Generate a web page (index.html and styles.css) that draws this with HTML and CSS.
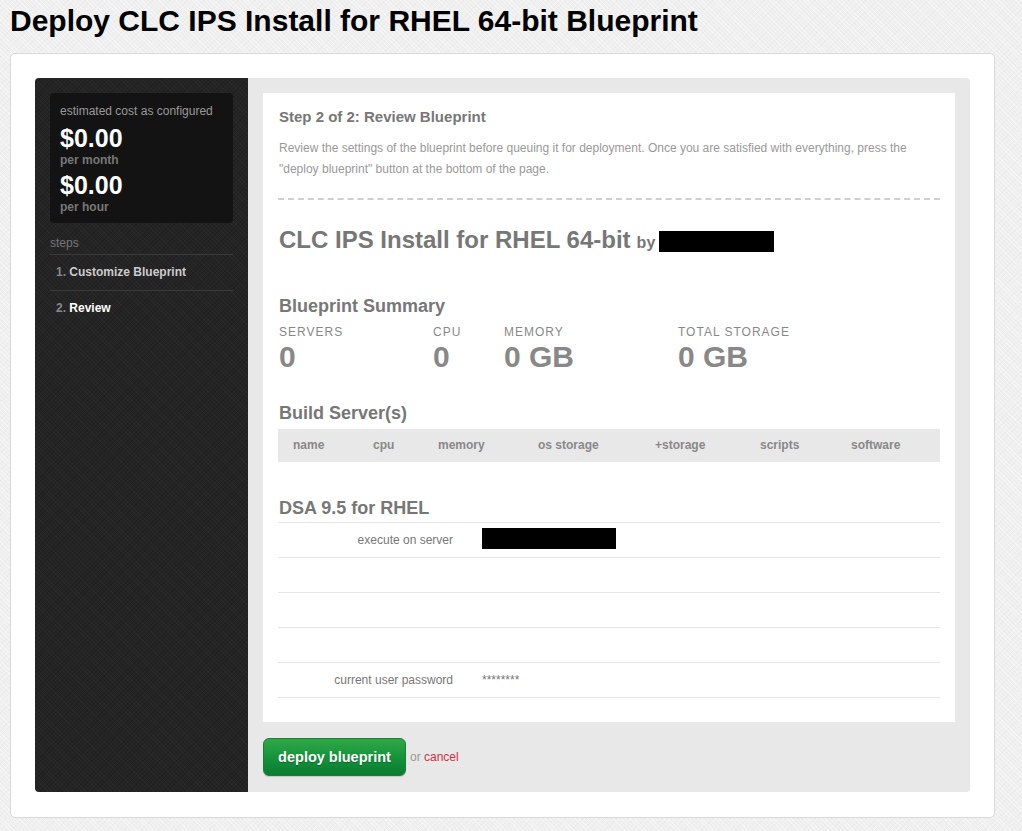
FILE: index.html
```html
<!DOCTYPE html>
<html>
<head>
<meta charset="utf-8">
<title>Deploy Blueprint</title>
<link rel="stylesheet" href="styles.css">
</head>
<body>
<h1 class="page-title">Deploy CLC IPS Install for RHEL 64-bit Blueprint</h1>
<div class="panel">
  <div class="wizard">
    <aside class="sidebar">
      <div class="cost">
        <div class="cost-label">estimated cost as configured</div>
        <div class="cost-value">$0.00</div>
        <div class="cost-unit">per month</div>
        <div class="cost-value">$0.00</div>
        <div class="cost-unit">per hour</div>
      </div>
      <div class="steps-title">steps</div>
      <ol class="steps">
        <li class="step"><span class="num">1.</span> Customize Blueprint</li>
        <li class="step active"><span class="num">2.</span> Review</li>
      </ol>
    </aside>
    <main class="main">
      <section class="card">
        <div class="intro">
          <h2 class="step-heading">Step 2 of 2: Review Blueprint</h2>
          <p class="desc">Review the settings of the blueprint before queuing it for deployment. Once you are satisfied with everything, press the "deploy blueprint" button at the bottom of the page.</p>
        </div>
        <h2 class="bp-title">CLC IPS Install for RHEL 64-bit <span class="by">by</span> <span class="redact redact-name"></span></h2>

        <h3 class="section">Blueprint Summary</h3>
        <div class="stats">
          <div class="stat"><div class="stat-label">Servers</div><div class="stat-value">0</div></div>
          <div class="stat"><div class="stat-label">CPU</div><div class="stat-value">0</div></div>
          <div class="stat"><div class="stat-label">Memory</div><div class="stat-value">0 GB</div></div>
          <div class="stat"><div class="stat-label">Total Storage</div><div class="stat-value">0 GB</div></div>
        </div>

        <h3 class="section section-build">Build Server(s)</h3>
        <div class="table-head">
          <span>name</span><span>cpu</span><span>memory</span><span>os storage</span><span>+storage</span><span>scripts</span><span>software</span>
        </div>

        <h3 class="section section-dsa">DSA 9.5 for RHEL</h3>
        <div class="params">
          <div class="param"><span class="param-label">execute on server</span><span class="param-value"><span class="redact redact-server"></span></span></div>
          <div class="param"><span class="param-label"></span><span class="param-value"></span></div>
          <div class="param"><span class="param-label"></span><span class="param-value"></span></div>
          <div class="param"><span class="param-label"></span><span class="param-value"></span></div>
          <div class="param"><span class="param-label">current user password</span><span class="param-value">********</span></div>
        </div>
      </section>
      <div class="actions">
        <button class="deploy-btn" type="button">deploy blueprint</button>
        <span class="or">or <a class="cancel" href="#">cancel</a></span>
      </div>
    </main>
  </div>
</div>
</body>
</html>
```
FILE: styles.css
```css
* { box-sizing: border-box; }

html, body {
  margin: 0;
  padding: 0;
}

body {
  background-color: #efefef;
  background-image:
    repeating-linear-gradient(45deg, rgba(255,255,255,0.35) 0 1px, transparent 1px 3px),
    repeating-linear-gradient(-45deg, rgba(0,0,0,0.015) 0 1px, transparent 1px 4px);
  font-family: "Liberation Sans", Arial, sans-serif;
  padding: 0 27px 0 10px;
  color: #777;
}

.page-title {
  margin: 3px 0 14px;
  font-size: 30px;
  line-height: 36px;
  font-weight: bold;
  color: #000;
}

.panel {
  background: #fff;
  border: 1px solid #d9d9d9;
  border-radius: 5px;
  padding: 24px 24px 25px;
}

.wizard {
  display: flex;
  border-radius: 4px;
  overflow: hidden;
  background: #e8e8e8;
}

/* Sidebar */
.sidebar {
  width: 213px;
  flex: none;
  background-color: #242424;
  background-image:
    repeating-linear-gradient(45deg, rgba(255,255,255,0.025) 0 1px, transparent 1px 3px),
    repeating-linear-gradient(-45deg, rgba(0,0,0,0.12) 0 1px, transparent 1px 3px);
  padding: 15px 15px;
}

.cost {
  background: #131313;
  border-radius: 4px;
  padding: 9px 10px 9px;
}

.cost-label {
  font-size: 12px;
  line-height: 18px;
  color: #999;
}

.cost-value {
  margin-top: 6px;
  font-size: 25px;
  line-height: 24px;
  font-weight: bold;
  color: #fff;
}

.cost-unit {
  margin-top: 3px;
  font-size: 12px;
  line-height: 14px;
  font-weight: bold;
  color: #777;
}

.steps-title {
  margin-top: 13px;
  font-size: 12px;
  line-height: 14px;
  color: #777;
  padding-bottom: 4px;
  border-bottom: 1px solid #3a3a3a;
}

.steps {
  list-style: none;
  margin: 0;
  padding: 0;
}

.step {
  font-size: 12px;
  line-height: 14px;
  font-weight: bold;
  color: #ccc;
  padding: 10px 6px 11px;
}

.step + .step {
  border-top: 1px solid #3a3a3a;
}

.step .num {
  color: #888;
}

.step.active {
  color: #fff;
}

/* Main */
.main {
  flex: 1;
  padding: 15px 15px 16px;
}

.card {
  background: #fff;
  padding: 15px 15px 24px;
}

.intro {
  padding-bottom: 18px;
  border-bottom: 2px dashed #cfcfcf;
}

.step-heading {
  margin: 0 0 0 1px;
  font-size: 15px;
  line-height: 18px;
  font-weight: bold;
  color: #777;
}

.desc {
  margin: 12px 0 0 1px;
  font-size: 12px;
  line-height: 21px;
  color: #999;
}

.bp-title {
  margin: 23px 0 0 1px;
  font-size: 24px;
  line-height: 28px;
  font-weight: bold;
  color: #777;
  display: flex;
  align-items: center;
}

.bp-title .by {
  font-size: 16px;
  margin: 6px 4px 0 6px;
}

.redact {
  display: inline-block;
  background: #000;
}

.redact-name {
  width: 115px;
  height: 21px;
  margin-top: 2px;
}

.section {
  margin: 38px 0 0 1px;
  font-size: 18px;
  line-height: 22px;
  font-weight: bold;
  color: #777;
}

.stats {
  display: grid;
  grid-template-columns: 154px 71px 174px auto;
  margin: 8px 0 0 1px;
}

.stat-label {
  font-size: 12px;
  line-height: 14px;
  letter-spacing: 1px;
  text-transform: uppercase;
  color: #888;
}

.stat-value {
  margin-top: 2px;
  font-size: 30px;
  line-height: 32px;
  font-weight: bold;
  color: #888;
}

.section-build {
  margin-top: 29px;
}

.table-head {
  display: grid;
  grid-template-columns: 80px 65px 100px 117px 105px 91px 104px;
  margin-top: 5px;
  height: 33px;
  background: #e8e8e8;
  font-size: 12px;
  line-height: 33px;
  font-weight: bold;
  color: #888;
}

.table-head span {
  padding-left: 15px;
}

.section-dsa {
  margin-top: 35px;
}

.params {
  margin-top: 3px;
  border-bottom: 1px solid #e5e5e5;
}

.param {
  display: flex;
  align-items: center;
  height: 35px;
  border-top: 1px solid #e5e5e5;
  font-size: 12px;
  color: #777;
}

.param-label {
  width: 175px;
  text-align: right;
}

.param-value {
  margin-left: 29px;
  display: flex;
  align-items: center;
}

.redact-server {
  width: 134px;
  height: 21px;
  margin-top: -3px;
}

.actions {
  margin-top: 16px;
  display: flex;
  align-items: center;
}

.deploy-btn {
  width: 143px;
  height: 38px;
  border: 1px solid #1c7f34;
  border-radius: 6px;
  background: linear-gradient(#30a846, #13913a 55%, #0b7c30);
  color: #fff;
  font-family: "Liberation Sans", Arial, sans-serif;
  font-size: 14.5px;
  font-weight: bold;
  text-shadow: 0 1px 1px rgba(0,0,0,0.3);
  box-shadow: 0 1px 1px rgba(0,0,0,0.15);
  padding: 0;
  cursor: pointer;
}

.or {
  margin-left: 4px;
  font-size: 12px;
  color: #999;
}

.cancel {
  color: #cc3344;
  text-decoration: none;
}
```
